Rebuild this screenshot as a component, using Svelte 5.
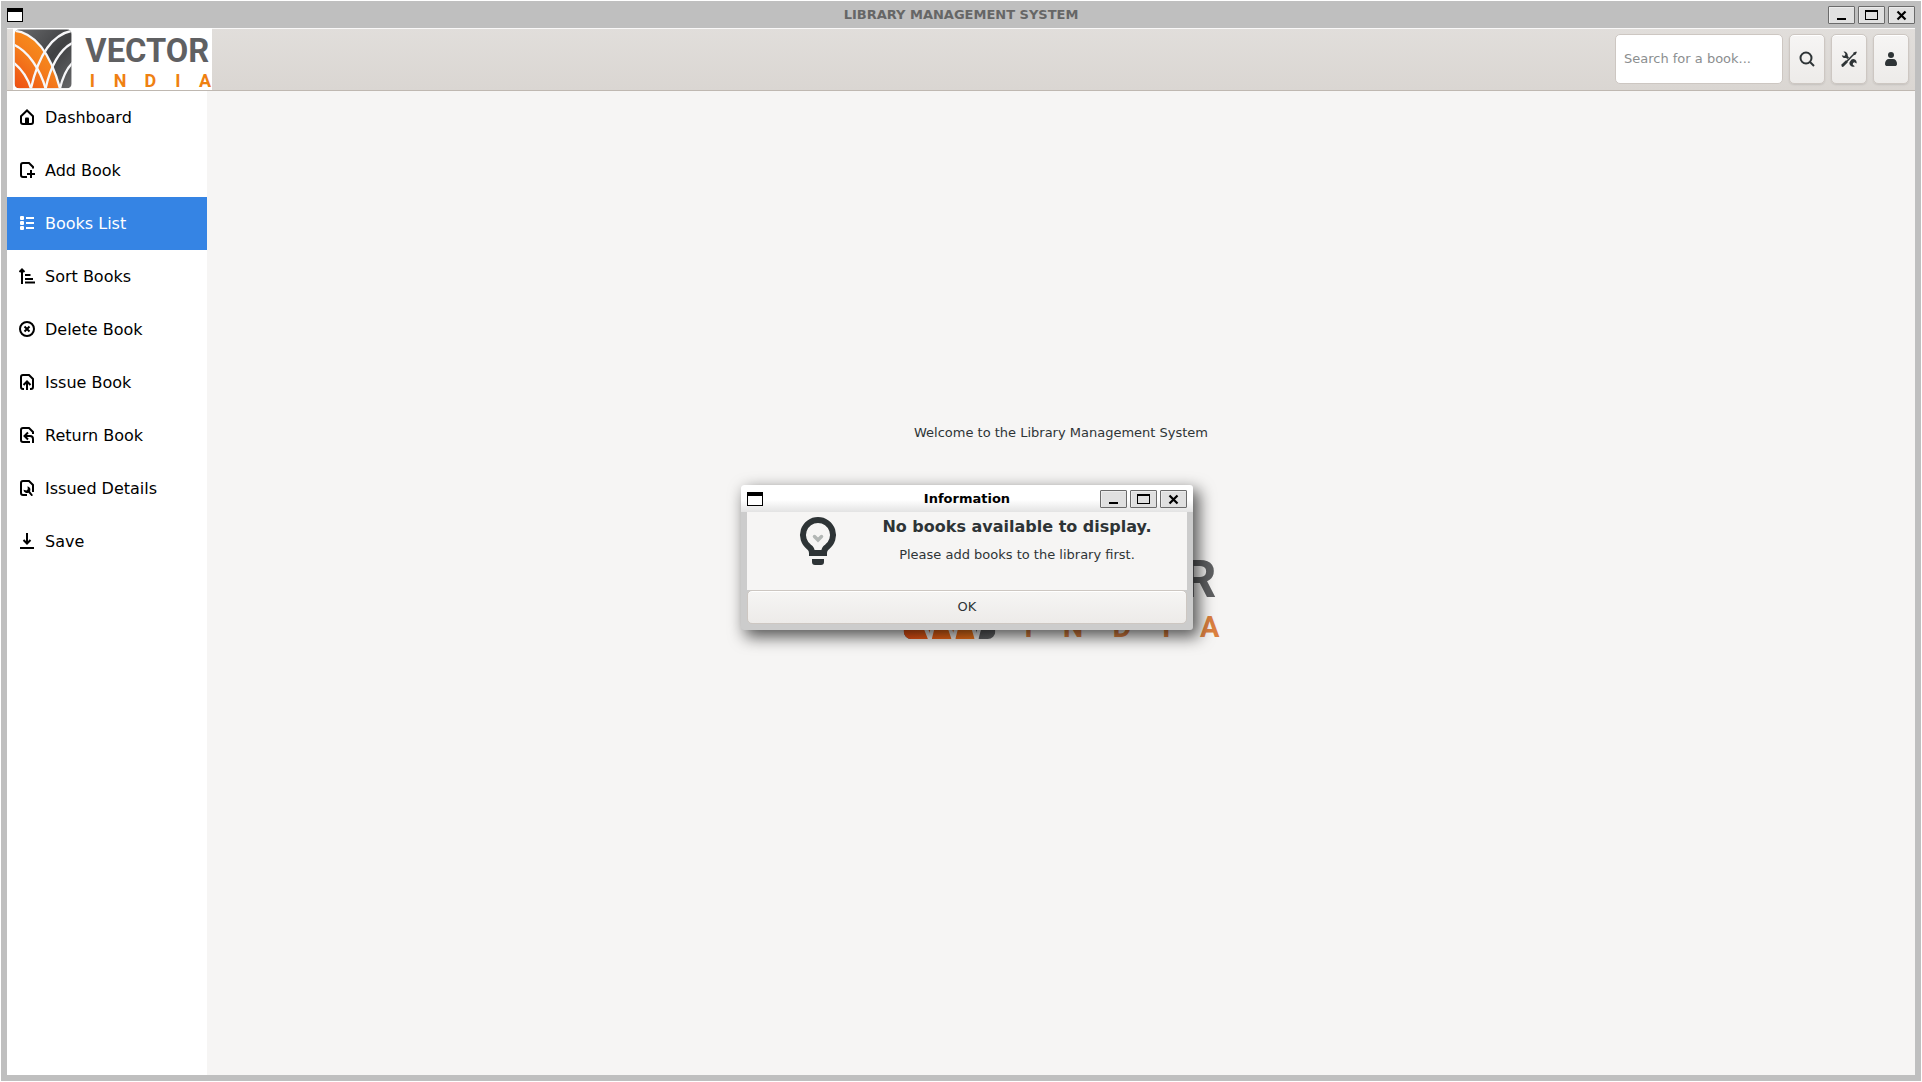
<script>
  const items = [
    { label: 'Dashboard', icon: 'home' },
    { label: 'Add Book', icon: 'add' },
    { label: 'Books List', icon: 'list' },
    { label: 'Sort Books', icon: 'sort' },
    { label: 'Delete Book', icon: 'remove' },
    { label: 'Issue Book', icon: 'issue' },
    { label: 'Return Book', icon: 'giveback' },
    { label: 'Issued Details', icon: 'details' },
    { label: 'Save', icon: 'save' }
  ];
  let selected = $state('list');
  let query = $state('');
</script>

{#snippet logo(id)}
  <svg class="logo" viewBox="0 0 597 186" role="img" aria-label="Vector India">
    <defs>
      <linearGradient id="{id}-orange" x1="0.7" y1="0" x2="0" y2="1">
        <stop offset="0" stop-color="#f9961d" />
        <stop offset="0.5" stop-color="#f47c1c" />
        <stop offset="1" stop-color="#ee4f14" />
      </linearGradient>
      <linearGradient id="{id}-grey" x1="0" y1="0" x2="1" y2="1">
        <stop offset="0" stop-color="#6a6b6d" />
        <stop offset="0.55" stop-color="#404143" />
        <stop offset="1" stop-color="#67686a" />
      </linearGradient>
      <clipPath id="{id}-clip"><rect x="5" y="4" width="171" height="177" rx="14" /></clipPath>
    </defs>
    <g clip-path="url(#{id}-clip)">
      <rect x="5" y="4" width="171" height="177" fill="url(#{id}-grey)" />
      <path d="M5 8C70 14 115 85 141 181H5Z" fill="url(#{id}-orange)" />
      <g class="veins">
        <path d="M2 8C70 14 115 85 142 185" />
        <path d="M2 50C45 70 80 120 99 185" />
        <path d="M2 104C28 125 45 150 55 185" />
        <path d="M179 8C110 20 72 100 53 185" />
        <path d="M179 44C140 65 112 115 97 185" />
        <path d="M179 104C158 125 148 150 140 185" />
      </g>
    </g>
    <text class="word" x="217" y="102">VECTOR</text>
    <text class="sub" x="238 321 412 495 576" y="178">INDIA</text>
  </svg>
{/snippet}

{#snippet windowButtons()}
  <div class="winbtns">
    <button aria-label="Minimize"><svg width="25" height="16"><path d="M8 12h9" stroke="#000" stroke-width="2" /></svg></button>
    <button aria-label="Maximize"><svg width="25" height="16" shape-rendering="crispEdges"><path d="M6 3h13v10H6zM7 5v7h11V5z" fill-rule="evenodd" /></svg></button>
    <button aria-label="Close"><svg width="25" height="16"><path d="M8.500 4.500l8 8M16.500 4.500l-8 8" stroke="#000" stroke-width="2.200" /></svg></button>
  </div>
{/snippet}

{#snippet windowIcon()}
  <svg class="winicon" width="16" height="14" shape-rendering="crispEdges" aria-hidden="true">
    <path d="M0 0h16v14H0z" /><path d="M1 4h14v9H1z" fill="#fff" />
  </svg>
{/snippet}

{#snippet icon(name)}
  <svg class="icon" width="16" height="16" viewBox="0 0 16 16" aria-hidden="true">
    {#if name === 'home'}
      <path class="s" d="M2 7.200L8 1.500l6 5.700V13a2 2 0 0 1-2 2H4a2 2 0 0 1-2-2z" /><path d="M6 15V9.500a1 1 0 0 1 1-1h2a1 1 0 0 1 1 1V15z" />
    {:else if name === 'add'}
      <path class="s" d="M8 15H4a2 2 0 0 1-2-2V3a2 2 0 0 1 2-2h6l4 4v1.500M12 8v8M8 12h8" />
    {:else if name === 'list'}
      <rect x="1" y="1" width="4" height="4" rx="1" /><rect x="1" y="6" width="4" height="4" rx="1" /><rect x="1" y="11" width="4" height="4" rx="1" />
      <path class="s" d="M7 3h8M7 8h8M7 13h8" />
    {:else if name === 'sort'}
      <path class="s" d="M3 16V2M0.500 4L3 1.500 5.500 4M6 7h5.500M6 11h8M6 14.500h10" />
    {:else if name === 'remove'}
      <circle class="s" cx="8" cy="8" r="7" /><path class="s" d="M5.500 5.500l5 5M10.500 5.500l-5 5" />
    {:else if name === 'issue'}
      <path class="s" d="M5 15H4a2 2 0 0 1-2-2V3a2 2 0 0 1 2-2h6l4 4v8a2 2 0 0 1-2 2h-1M8 16V8M4.500 11L8 7.500l3.500 3.500" />
    {:else if name === 'giveback'}
      <path class="s" d="M11 15H4a2 2 0 0 1-2-2V3a2 2 0 0 1 2-2h6l4 4v2M9 5.500L5.500 9 9 12.500M6 9h5a3 3 0 0 1 3 3v4" />
    {:else if name === 'details'}
      <path class="s" d="M8 15H4a2 2 0 0 1-2-2V3a2 2 0 0 1 2-2h6l4 4v7" /><path d="M8.500 6.200a3.500 3.500 0 0 1 2.500 5l3 4-1.500 1-3-3.500a3.500 3.500 0 0 1-5-3l3 .8 1.300-1.200z" />
    {:else if name === 'save'}
      <path class="s" d="M8 0v10M4.500 7L8 10.500 11.500 7M1 15h14" />
    {:else if name === 'search'}
      <circle class="s" cx="7" cy="7" r="5.500" /><path class="s" d="M11 11l4 4" />
    {:else if name === 'tools'}
      <path d="M1.500 13.500L12 3l1 1L2.500 15z" />
      <path d="M12.500 1.500l2.800-1 .5.700-1.300 2.600-1.800.5-.8-.8z" />
      <path d="M2.500.5L4.500 3 3.500 5 .8 4.200A3.800 3.800 0 0 0 5 7l1.500 1L8 6.500 6.700 5A3.800 3.800 0 0 0 2.500.5z" />
      <path d="M10.500 8.500a3.500 3.500 0 0 1 5 4l-2-1.200-1.500.6-.2 1.800 2 1.500a3.500 3.500 0 0 1-5-4.500z" />
      <path d="M.2 13.800L5 9.300l1.800 1.900-4.500 4.500-1.300.2z" />
    {:else if name === 'user'}
      <circle cx="8" cy="4" r="3" /><path d="M2 13c0-3 1.500-5 4-5h4c2.500 0 4 2 4 5 0 1.500-1 2-2 2H4c-1 0-2-.5-2-2z" />
    {/if}
  </svg>
{/snippet}

<div class="window">
  <div class="titlebar">
    {@render windowIcon()}
    <h1>LIBRARY MANAGEMENT SYSTEM</h1>
    {@render windowButtons()}
  </div>

  <div class="client">
    <header>
      <div class="brand">{@render logo('top')}</div>
      <div class="tools">
        <input type="text" aria-label="Search for a book" placeholder="Search for a book..." bind:value={query} />
        <button aria-label="Search">{@render icon('search')}</button>
        <button aria-label="Settings">{@render icon('tools')}</button>
        <button aria-label="Account">{@render icon('user')}</button>
      </div>
    </header>

    <div class="body">
      <nav>
        {#each items as item}
          <button class:active={selected === item.icon} onclick={() => (selected = item.icon)}>
            {@render icon(item.icon)}<span>{item.label}</span>
          </button>
        {/each}
      </nav>
      <main>
        <p>Welcome to the Library Management System</p>
        <div class="hero">{@render logo('hero')}</div>
      </main>
    </div>
  </div>
</div>

<div class="dialog" role="dialog" aria-labelledby="dialog-title">
  <div class="titlebar light">
    {@render windowIcon()}
    <h2 id="dialog-title">Information</h2>
    {@render windowButtons()}
  </div>
  <div class="panel">
    <div class="message">
      <svg class="bulb" width="48" height="48" viewBox="0 0 48 48" aria-hidden="true">
        <path d="M24 3a15 15 0 0 0-9 27q3 2 3 6h12q0-4 3-6a15 15 0 0 0-9-27z" fill="none" stroke="#2e3436" stroke-width="6" />
        <path d="M15 33h18v3a3 3 0 0 1-3 3H18a3 3 0 0 1-3-3zM18 42h12v3a3 3 0 0 1-3 3h-6a3 3 0 0 1-3-3z" fill="#2e3436" />
        <path d="M20.500 19.500L24 23l3.500-3.500" fill="none" stroke="#b3b7b5" stroke-width="3.500" stroke-linecap="round" />
      </svg>
      <div class="copy">
        <strong>No books available to display.</strong>
        <p>Please add books to the library first.</p>
      </div>
    </div>
    <button class="ok">OK</button>
  </div>
</div>

<style>
  :global(body) {
    background: #fff;
    font-family: 'DejaVu Sans', sans-serif;
    font-size: 13px;
    color: #2e3436;
  }
  h1, h2, p { margin: 0; }
  button, input { font: inherit; color: inherit; box-sizing: border-box; }
  svg { display: block; }

  .window {
    box-sizing: border-box;
    min-height: 100vh;
    border: 1px solid #fff;
    background: #bfbfbf;
    display: flex;
    flex-direction: column;
  }
  .titlebar {
    height: 27px;
    padding: 0 6px;
    display: grid;
    grid-template-columns: 1fr auto 1fr;
    align-items: center;
    flex: none;
  }
  .titlebar h1, .titlebar h2 {
    font-size: 13px;
    line-height: 26px;
    font-weight: bold;
    color: #666;
  }
  .titlebar.light {
    background: linear-gradient(#fff 55%, #e3e3e3);
    border-radius: 3px 3px 0 0;
  }
  .titlebar.light h2 { color: #000; }
  .winbtns { display: flex; gap: 3px; justify-self: end; padding-top: 1px; }
  .winbtns button {
    width: 27px;
    height: 18px;
    padding: 0;
    border: 1px solid #6b6b6b;
    border-radius: 1px;
    background: #e0e0e0;
    box-shadow: inset 1px 1px #ececec;
  }

  .client {
    flex: 1;
    display: flex;
    flex-direction: column;
    margin: 0 6px 6px;
    background: #f6f5f4;
  }
  header {
    display: flex;
    justify-content: space-between;
    padding: 0 6px;
    border-bottom: 1px solid #bfb8b1;
    background: linear-gradient(#e1dedb, #dad6d2);
    box-shadow: inset 0 1px #f9f8f8;
  }
  .brand { width: 199px; height: 62px; background: #fff; }
  .logo { width: 100%; height: auto; }
  .veins { fill: none; stroke: #f7f7f9; stroke-width: 7; }
  .word, .sub { font-family: Roboto, sans-serif; font-weight: bold; }
  .word { font-size: 98px; fill: #5f6062; }
  .sub { font-size: 54px; fill: #ef8011; text-anchor: middle; }
  .tools { display: flex; gap: 6px; padding: 6px 0; }
  .tools input {
    width: 168px;
    padding: 0 8px 2px;
    border: 1px solid #cdc7c2;
    border-radius: 5px;
    background: #fff;
  }
  .tools input::placeholder { color: #8b8e8f; opacity: 1; }
  .tools button {
    width: 36px;
    padding: 0 9px;
    border: 1px solid #cdc7c2;
    border-radius: 5px;
    background: linear-gradient(#f6f5f4, #edebe9);
    box-shadow: inset 0 1px #fff, 0 1px 2px rgba(0, 0, 0, 0.1);
  }
  .icon { flex: none; fill: currentColor; margin-bottom: 1px; }
  .icon .s { fill: none; stroke: currentColor; stroke-width: 2; }

  .body { flex: 1; display: flex; }
  nav {
    width: 200px;
    flex: none;
    background: #fff;
    display: flex;
    flex-direction: column;
  }
  nav button {
    height: 53px;
    padding: 0 12px;
    border: 0;
    background: none;
    display: flex;
    align-items: center;
    gap: 10px;
    font-size: 16px;
    color: #000;
    text-align: left;
  }
  nav button.active { background: #3584e4; color: #fff; }
  main {
    flex: 1;
    display: flex;
    flex-direction: column;
    align-items: center;
    justify-content: center;
    gap: 99px;
    padding-bottom: 101px;
  }
  main p { line-height: 20px; }
  .hero { width: 320px; }
  .hero .veins { stroke: #f6f5f4; }
  .hero .sub { fill: #dc8040; }

  .dialog {
    position: absolute;
    left: 741px;
    top: 485px;
    width: 452px;
    background: #ccc;
    border-radius: 3px;
    box-shadow: 5px 6px 16px 1px rgba(0, 0, 0, 0.65);
  }
  .panel { margin: 0 6px; padding-bottom: 6px; }
  .message {
    display: grid;
    grid-template-columns: 82px 1fr;
    gap: 18px;
    height: 78px;
    padding: 0 30px;
    background: #f6f5f4;
  }
  .bulb { margin: 5px auto 0; }
  .copy { text-align: center; padding-top: 5px; white-space: nowrap; }
  .copy strong { display: block; font-size: 16px; line-height: 20px; }
  .copy p { line-height: 20px; padding-top: 8px; }
  .ok {
    display: block;
    width: 100%;
    height: 34px;
    padding: 0 6px 2px;
    border: 1px solid #cdc7c2;
    border-radius: 5px;
    background: linear-gradient(#f6f5f4, #edebe9);
    box-shadow: inset 0 1px #fff;
  }
</style>
